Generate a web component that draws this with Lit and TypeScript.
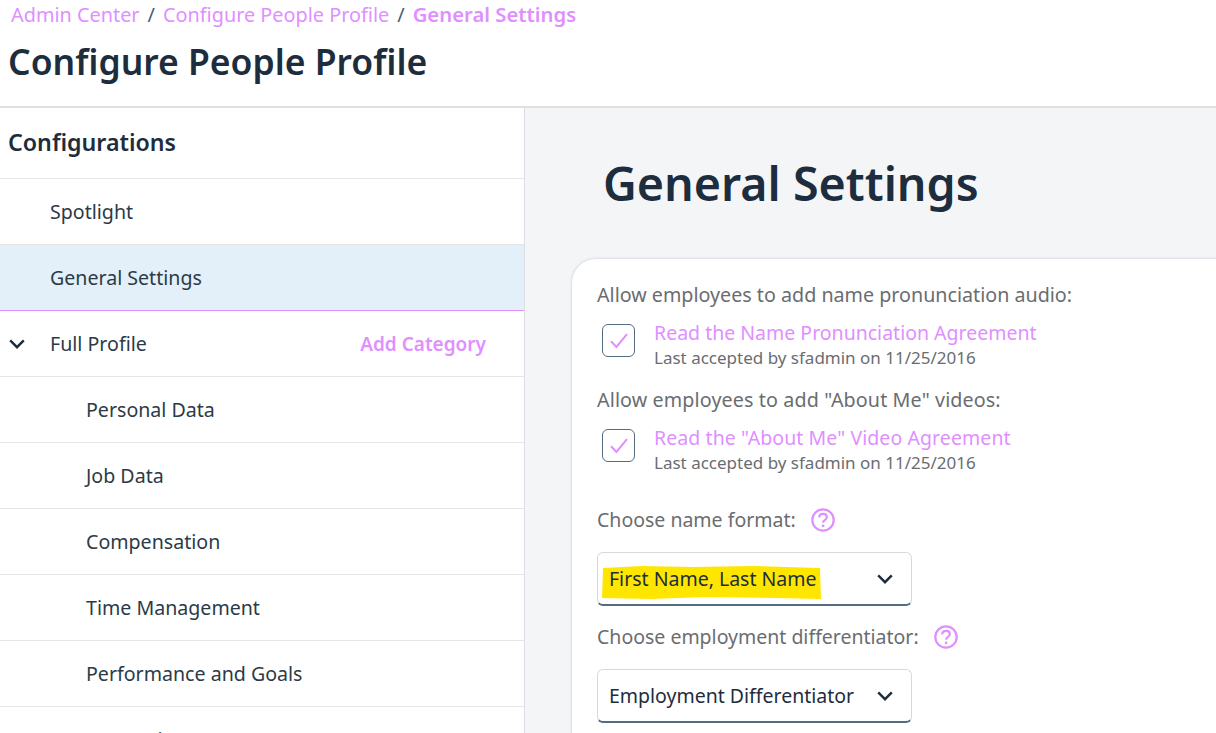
import { LitElement, html, css, svg } from "lit";
import { customElement } from "lit/decorators.js";

const chevron = svg`<svg class="chev" width="16" height="10" viewBox="0 0 16 10" fill="none"><path d="M1.2 1.4 8 8.2l6.8-6.8" stroke="#1d2d3e" stroke-width="2.4"/></svg>`;
const help = html`<svg class="help" width="24" height="24" viewBox="0 0 24 24" fill="none"><circle cx="12" cy="12" r="10.7" stroke="#e08fff" stroke-width="2.2"/><path d="M8.2 9.4c0-2.3 1.7-3.6 3.9-3.6s3.7 1.3 3.7 3.3c0 1.5-.8 2.3-2 3.1-1.1.7-1.7 1.2-1.7 2.6" stroke="#e08fff" stroke-width="2.2"/><circle cx="12.1" cy="17.8" r="1.4" fill="#e08fff"/></svg>`;
const check = html`<span class="box"><svg width="18" height="16" viewBox="0 0 18 16" fill="none"><path d="M1 8.2 6.4 14 17 1.2" stroke="#e08fff" stroke-width="2"/></svg></span>`;

@customElement("app-root")
export class AppRoot extends LitElement {
  static styles = css`
    :host { display: block; width: 1216px; height: 733px; overflow: hidden; background: #fff; font-family: "Noto Sans", "Open Sans", sans-serif; color: #1d2d3e; }
    header { height: 108px; box-sizing: border-box; border-bottom: 2px solid #e0e0e0; padding: 0 0 0 8px; }
    .crumbs { display: flex; align-items: baseline; gap: 8px; font-size: 19.85px; line-height: 28px; color: #e08fff; padding-left: 3px; }
    .crumbs i { font-style: normal; color: #475e75; }
    .crumbs b { font-weight: 600; font-size: 20.3px; }
    h1 { margin: 9px 0 0; font-size: 35.5px; line-height: 46px; font-weight: 600; white-space: nowrap; }
    .body { display: flex; height: 625px; }
    aside { width: 525px; flex: none; box-sizing: border-box; border-right: 1px solid #dcdfe3; overflow: hidden; }
    .ch { height: 71px; box-sizing: border-box; padding: 0 8px 2px; display: flex; align-items: center; font-size: 23.2px; font-weight: 600; border-bottom: 1px solid #e5e5e5; }
    .row { height: 66px; box-sizing: border-box; display: flex; align-items: center; padding-left: 50px; font-size: 19.6px; color: #2c3a47; border-bottom: 1px solid #e5e5e5; position: relative; }
    .row.sub { padding-left: 86px; }
    .row.sel { background: #e3f0f9; border-bottom: 1px solid #e08fff; }
    .row .chev { position: absolute; left: 9px; top: 28px; }
    .row a { margin-left: auto; margin-right: 38px; font-size: 19px; font-weight: 600; color: #e08fff; }
    main { flex: 1; background: #f4f5f7; padding: 42px 0 0 47px; min-width: 0; }
    h2 { margin: 0 0 0 31px; font-size: 46.6px; line-height: 66px; font-weight: 600; white-space: nowrap; }
    .card { margin-top: 43px; background: #fff; border-radius: 24px 0 0 0; box-shadow: 0 0 3px rgba(85,107,130,.35); padding: 19px 0 0 25px; height: 480px; box-sizing: border-box; font-size: 19.7px; color: #6a6d70; }
    .lab { line-height: 34px; white-space: nowrap; }
    .lab.l2 { margin-top: 15px; letter-spacing: .12px; }
    .item { display: flex; gap: 19px; margin: 6px 0 0 5px; }
    .box { width: 33px; height: 33px; margin-top: 6px; flex: none; box-sizing: border-box; border: 1.3px solid #556b82; border-radius: 6px; display: flex; align-items: center; justify-content: center; }
    .link { font-size: 19.5px; line-height: 30px; color: #e08fff; white-space: nowrap; }
    .link.l2 { letter-spacing: .08px; }
    .meta { font-size: 17px; line-height: 20px; color: #6a6d70; white-space: nowrap; }
    .q { display: flex; align-items: center; gap: 15px; line-height: 34px; font-size: 19.5px; }
    .q1 { margin-top: 29.5px; }
    .q2 { margin-top: 14px; }
    .sel-box { position: relative; margin-top: 15px; width: 315px; height: 54px; box-sizing: border-box; background: #fff; border: 1px solid #d5dadd; border-bottom: 2px solid #556b82; border-radius: 6px; display: flex; align-items: center; padding-left: 11px; font-size: 19.5px; color: #1d2d3e; }
    .sel-box span { position: relative; white-space: nowrap; }
    .sel-box .chev { position: absolute; left: 279px; top: 21px; }
    .mark { position: absolute; left: 4px; top: 12px; }
  `;
  render() {
    const rows = ["Personal Data", "Job Data", "Compensation", "Time Management", "Performance and Goals", "Succession"];
    return html`
      <header>
        <div class="crumbs"><span>Admin Center</span><i>/</i><span>Configure People Profile</span><i>/</i><b>General Settings</b></div>
        <h1>Configure People Profile</h1>
      </header>
      <div class="body">
        <aside>
          <div class="ch">Configurations</div>
          <div class="row">Spotlight</div>
          <div class="row sel">General Settings</div>
          <div class="row">${chevron}Full Profile<a>Add Category</a></div>
          ${rows.map((r) => html`<div class="row sub">${r}</div>`)}
        </aside>
        <main>
          <h2>General Settings</h2>
          <div class="card">
            <div class="lab">Allow employees to add name pronunciation audio:</div>
            <div class="item">${check}<div><div class="link">Read the Name Pronunciation Agreement</div><div class="meta">Last accepted by sfadmin on 11/25/2016</div></div></div>
            <div class="lab l2">Allow employees to add "About Me" videos:</div>
            <div class="item">${check}<div><div class="link l2">Read the "About Me" Video Agreement</div><div class="meta">Last accepted by sfadmin on 11/25/2016</div></div></div>
            <div class="q q1">Choose name format: ${help}</div>
            <div class="sel-box">
              <svg class="mark" width="219" height="34" viewBox="0 0 219 34"><path d="M1 3 40 1l50 1 60-1 68 2 1 31-45-1-70-1-55 2-49-1z" fill="#ffe600"/></svg>
              <span>First Name, Last Name</span>${chevron}
            </div>
            <div class="q q2">Choose employment differentiator: ${help}</div>
            <div class="sel-box"><span>Employment Differentiator</span>${chevron}</div>
          </div>
        </main>
      </div>
    `;
  }
}
